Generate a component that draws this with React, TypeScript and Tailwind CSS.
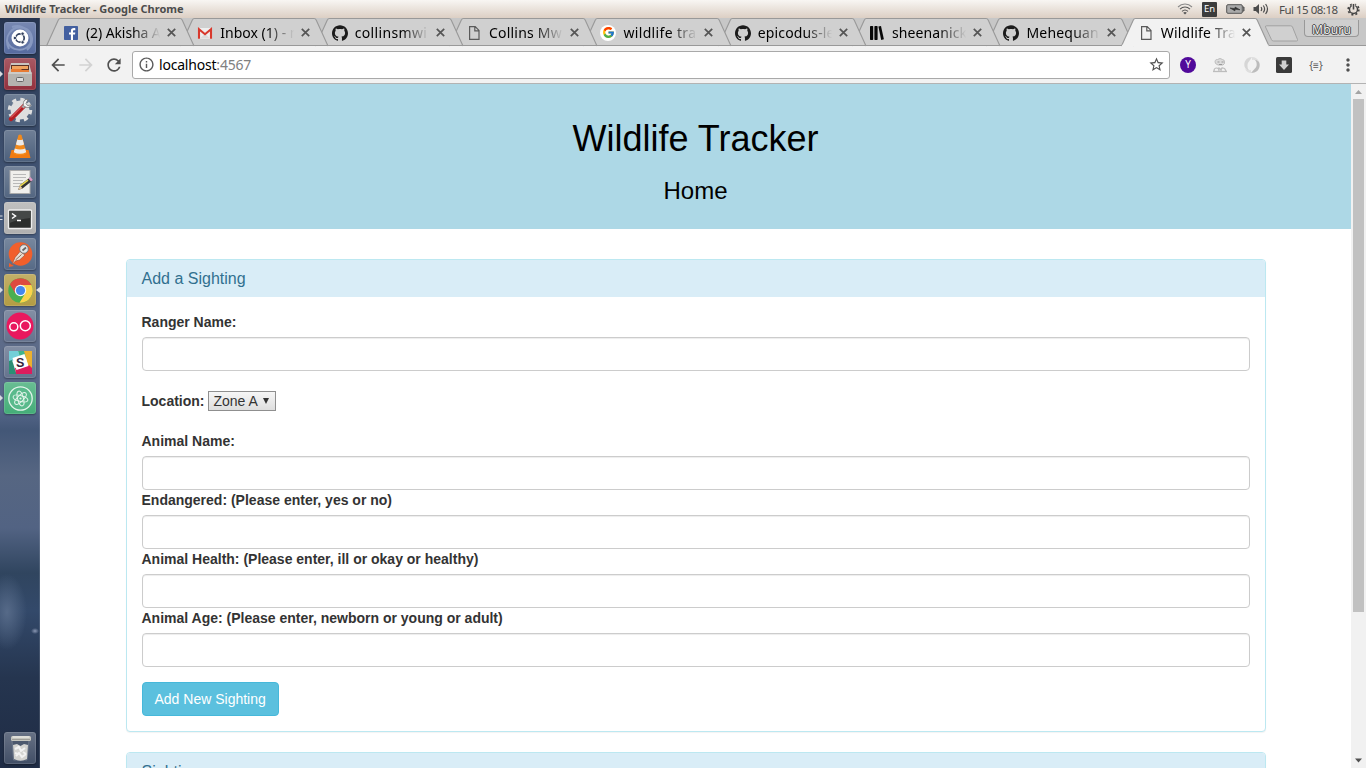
import type { ReactNode } from 'react';
import { FcGoogle } from 'react-icons/fc';
import { SiGithub } from 'react-icons/si';
import { MdArrowBack, MdArrowForward, MdRefresh, MdInfoOutline, MdStarBorder, MdMoreVert } from 'react-icons/md';

const PageIcon = () => (
  <svg width="16" height="16" viewBox="0 0 16 16" fill="none" stroke="#5a5a5a" strokeWidth="1.2">
    <path d="M3.6 1.6h5.6l3.8 3.8v9H3.6z M8.8 1.6v4.2h4.2" />
  </svg>
);

const FacebookIcon = () => (
  <svg width="16" height="16" viewBox="0 0 16 16">
    <rect x="1" y="1" width="14" height="14" rx="0.8" fill="#4360a0" />
    <path d="M10 15V9.6h2l.3-2.1H10V6.2c0-.7.3-1 1-1h1.3V3.2c-3-.4-4.4.6-4.4 2.7v1.6H6v2.1h1.9V15z" fill="#fff" />
  </svg>
);

const GmailIcon = () => (
  <svg width="16" height="16" viewBox="0 0 16 16">
    <rect x="1" y="3" width="14" height="11" rx="1" fill="#efefef" />
    <path d="M3 13.5 8 8.5l5 5z" fill="#dcdcdc" />
    <path d="M2 13.7V4.2l6 5 6-5v9.5" fill="none" stroke="#d8392d" strokeWidth="2.1" />
  </svg>
);

const BooksIcon = () => (
  <svg width="16" height="16" viewBox="0 0 16 16" fill="#080808">
    <rect x="1" y="1" width="3.2" height="14" rx=".7" />
    <rect x="5.4" y="1" width="3.2" height="14" rx=".7" />
    <path d="M9.4 1.5 12 1l2.9 13.3-2.7.7z" />
  </svg>
);

const GoogleIcon = () => (
  <span className="flex size-4 items-center justify-center rounded-full bg-white">
    <FcGoogle size={13} />
  </span>
);

type TabData = { title: string; icon: ReactNode; track: string };

const tabs: TabData[] = [
  { title: '(2) Akisha A', icon: <FacebookIcon />, track: 'tracking-[-0.1px]' },
  { title: 'Inbox (1) - m', icon: <GmailIcon />, track: 'tracking-[0px]' },
  { title: 'collinsmwi', icon: <SiGithub size={16} color="#1b1b1b" />, track: 'tracking-[0.35px]' },
  { title: 'Collins Mw', icon: <PageIcon />, track: 'tracking-[0.2px]' },
  { title: 'wildlife tra', icon: <GoogleIcon />, track: 'tracking-[0.35px]' },
  { title: 'epicodus-le', icon: <SiGithub size={16} color="#1b1b1b" />, track: 'tracking-[0.15px]' },
  { title: 'sheenanick', icon: <BooksIcon />, track: 'tracking-[0.1px]' },
  { title: 'Mehequan', icon: <SiGithub size={16} color="#1b1b1b" />, track: 'tracking-[0.2px]' },
  { title: 'Wildlife Tra', icon: <PageIcon />, track: 'tracking-[0.2px]' },
];

function Tab({ tab, index }: { tab: TabData; index: number }) {
  const active = index === 8;
  return (
    <div className="relative h-7 w-[134.35px] shrink-0" style={{ zIndex: active ? 20 : 10 - index }}>
      <svg className="absolute top-0 left-0 overflow-visible" width="149" height="28" viewBox="0 0 149 28">
        <path
          d="M.5 28 12.200 2.200Q13 .5 14.500.5H134Q135.500.5 136.300 2.200L148 28"
          fill={active ? '#f2f2f2' : '#d0d0d0'}
          stroke="#999"
          strokeWidth="1.1"
        />
        {!active && <path d="M0 27.500H149" stroke="#999" />}
        {active && <path d="M1 27.500H147.500" stroke="#f2f2f2" strokeWidth="1.500" />}
      </svg>
      <div className="relative flex h-7 items-center pt-px pl-[17px]">
        <span className="flex size-4 shrink-0 items-center justify-center">{tab.icon}</span>
        <span
          className={`ml-[7px] w-[75px] overflow-hidden font-['Noto_Sans',sans-serif] text-[14px] leading-5 whitespace-nowrap text-black [mask-image:linear-gradient(to_right,black_62%,transparent_99%)] ${tab.track}`}
        >
          {tab.title}
        </span>
        <svg className="ml-[6px] shrink-0" width="9" height="9" viewBox="0 0 9 9" stroke="#555" strokeWidth="1.7">
          <path d="M.8.8 8.200 8.200M8.200.8.8 8.200" />
        </svg>
      </div>
    </div>
  );
}

function TitleBar() {
  return (
    <div className="flex h-[18px] shrink-0 items-center justify-between bg-linear-to-b from-[#f8f6f3] to-[#dccfc4] pl-[5px] font-['Noto_Sans',sans-serif] text-[#4c4c4c]">
      <span className="text-[11px] leading-[17px] font-bold tracking-[-0.02px] relative -top-px">Wildlife Tracker - Google Chrome</span>
      <div className="flex h-[18px] items-center pr-[6px]">
        <svg width="16" height="14" viewBox="0 0 16 14" fill="none" stroke="#555" strokeWidth="1.100">
          <path d="M1 5C5 1 11 1 15 5" stroke="#8a8a8a" />
          <path d="M3 7.200C6 4.200 10 4.200 13 7.200M5 9.300C7 7.500 9 7.500 11 9.300" />
          <path d="M8 12.500 6.200 10.700Q8 9.500 9.800 10.700z" fill="#555" stroke="none" />
        </svg>
        <span className="ml-[9px] flex h-[15px] w-[15px] items-center justify-center rounded-[1px] bg-[#3c3c3c] text-[9.500px] text-white">En</span>
        <svg className="ml-[9px]" width="19" height="12" viewBox="0 0 19 12">
          <rect x=".7" y="1.700" width="15.600" height="8.600" rx="1.200" fill="#aaa" stroke="#555" />
          <path d="M16.500 4h1.500v4h-1.500" fill="#777" stroke="#555" />
          <path d="m4 5 5 .6 0-1.600 5 2.800-5-.5v1.600z" fill="#333" stroke="#333" strokeWidth=".6" />
        </svg>
        <svg className="ml-[8px]" width="16" height="14" viewBox="0 0 16 14" fill="none" stroke="#4c4c4c" strokeWidth="1.200">
          <path d="M.5 5h2.300L6 2v10L2.800 9H.5z" fill="#4c4c4c" stroke="none" />
          <path d="M8 5q1.500 2 0 4M10.300 3.500q2.600 3.500 0 7M12.600 2q3.800 5 0 10" />
        </svg>
        <span className="ml-[10px] w-[60px] text-[11.500px] leading-[17px] tracking-[-0.5px] whitespace-nowrap">Ful 15 08:18</span>
        <svg className="ml-[8px]" width="13" height="13" viewBox="0 0 13 13" fill="none" stroke="#444">
          <circle cx="6.500" cy="6.500" r="4" strokeWidth="1.400" />
          <circle cx="6.500" cy="6.500" r="5.300" strokeWidth="1.700" strokeDasharray="2 2.160" />
          <path d="M6.500 0v6.500" stroke="#ebe4de" strokeWidth="3.500" />
          <path d="M6.500 1v5.500" strokeWidth="1.600" />
        </svg>
      </div>
    </div>
  );
}

type AppTile = { name: string; bg: string; mark: string; art: ReactNode };

const apps: AppTile[] = [
  {
    name: 'dash', bg: 'bg-[#566b9f]', mark: '',
    art: (
      <>
        <path d="M5 27C-1 14 8 3 20 6c9 3 11 15 3 22M8 5c12-4 22 8 18 18M3 19c4 11 18 11 23 3" fill="none" stroke="#8798c0" strokeWidth="2" />
        <circle cx="16" cy="16" r="8.500" fill="#fff" />
        <circle cx="16" cy="16" r="4.200" fill="none" stroke="#33415f" strokeWidth="1.700" />
        <g fill="#33415f" stroke="#fff" strokeWidth=".8">
          <circle cx="10.900" cy="16" r="1.700" /><circle cx="18.600" cy="11.700" r="1.700" /><circle cx="18.600" cy="20.300" r="1.700" />
        </g>
      </>
    ),
  },
  {
    name: 'files', bg: 'bg-[#93303d]', mark: '◂r',
    art: (
      <>
        <path d="M7 5h18l3 12H4z" fill="#c9c5c0" />
        <path d="M7 7h18v9H7z" fill="#5b3224" />
        <path d="M8 8h16v3H8z" fill="#f0a45f" /><path d="M7 11h10l1 1h7v3H7z" fill="#e77c35" />
        <rect x="4" y="14" width="24" height="14" rx="1.500" fill="#b5b3af" />
        <path d="M4.500 15h23" stroke="#e5e3df" />
        <rect x="12.500" y="19.500" width="7" height="4" rx="1" fill="#ddd" stroke="#666" />
      </>
    ),
  },
  {
    name: 'settings', bg: 'bg-[#4c607c]', mark: '',
    art: (
      <>
        <circle cx="16" cy="16" r="9.500" fill="#dedede" />
        <circle cx="16" cy="16" r="10.500" fill="none" stroke="#dedede" strokeWidth="3.500" strokeDasharray="4.200 4.050" />
        <path d="m7 25 13-13" stroke="#b51f24" strokeWidth="4.500" strokeLinecap="round" />
        <path d="m7 23.500 11-11" stroke="#e77375" />
        <path d="m18.500 13.500 3-3" stroke="#aaa" strokeWidth="3" />
        <path d="M24 5.500a4 4 0 1 0 3 5.500l-3.500.5-1.500-2z" fill="#f2f2f2" stroke="#777" strokeWidth=".8" />
      </>
    ),
  },
  {
    name: 'vlc', bg: 'bg-[#4c607c]', mark: '',
    art: (
      <>
        <path d="m7.500 20-2 8h21l-2-8z" fill="#ef7b12" />
        <path d="m14.500 5-5 18c1 3 12 3 13 0L17.500 5q-1.500-1.200-3 0z" fill="#f28a1c" />
        <path d="m13.300 9.500-1.400 5q4 1.800 8.200 0l-1.400-5q-2.700 1-5.400 0z" fill="#ecebea" />
        <path d="m10.800 18.500-1 3.700q6 3 12.400 0l-1-3.700q-5 2-10.400 0z" fill="#ecebea" />
      </>
    ),
  },
  {
    name: 'editor', bg: 'bg-[#536681]', mark: '',
    art: (
      <>
        <rect x="6" y="4.500" width="20" height="23" fill="#f0efec" stroke="#aaa" />
        <path d="M9 8.500h13M9 11.500h13M9 14.500h10M9 17.500h9M9 20.500h6" stroke="#b9b9b9" />
        <path d="m14 24 2-5 10-7.500 2.500 3-10 8z" fill="#333" />
        <path d="m15.500 19.500 8-6 1 1.300-8 6z" fill="#e9d74e" />
        <path d="m14 24 2-4.500 2.500 2.800z" fill="#e7c99c" />
        <path d="m24.500 12.500 2-1.500 2.400 3-2 1.500z" fill="#df9bc5" />
      </>
    ),
  },
  {
    name: 'terminal', bg: 'bg-[#b0b0b0]', mark: '=r',
    art: (
      <>
        <rect x="4.500" y="8" width="23" height="18.500" rx="1" fill="#2b2d2c" stroke="#eee" strokeWidth="1.400" />
        <path d="M5.500 9h21v7q-12 1-21 5z" fill="#454847" />
        <path d="m8 11.500 3.500 2.500L8 16.500M13 18.500h4" fill="none" stroke="#fff" strokeWidth="1.500" />
      </>
    ),
  },
  {
    name: 'postman', bg: 'bg-[#566a86]', mark: '',
    art: (
      <>
        <circle cx="16.500" cy="16" r="11.800" fill="#f15f2b" />
        <path d="m5 25 5 3-5 1z" fill="#f15f2b" />
        <path d="M8 26.500 11 19.500l5-6 5 3.500-5.500 5-4 1z" fill="#e8dfd3" stroke="#a75236" strokeWidth=".7" />
        <path d="m11.500 22 6-5.500" stroke="#8b6a5a" />
        <circle cx="20" cy="11" r="4.300" fill="#e5e5e5" stroke="#777" />
        <path d="m18.500 12.500 3.500-3" stroke="#666" strokeWidth="1.800" />
      </>
    ),
  },
  {
    name: 'chrome', bg: 'bg-[#b39c43]', mark: '◂rl',
    art: (
      <>
        <circle cx="16.500" cy="16.500" r="12.200" fill="#4aaf50" />
        <path d="M5.900 10.400a12.200 12.200 0 0 1 21.200 0l.3.700H16.500l-5.300 8.200z" fill="#de4b40" />
        <path d="M27.400 11.100A12.200 12.200 0 0 1 15.500 28.700l6-9.700-5-7.900z" fill="#fbd34a" />
        <circle cx="16.500" cy="16.500" r="5.700" fill="#f6f6f6" />
        <circle cx="16.500" cy="16.500" r="4.600" fill="#4587ee" />
      </>
    ),
  },
  {
    name: 'recorder', bg: 'bg-[#65738e]', mark: '',
    art: (
      <>
        <circle cx="16" cy="16" r="13.500" fill="#e9185e" />
        <g fill="none" stroke="#fff" strokeWidth="1.500"><circle cx="9.800" cy="16.800" r="4" /><circle cx="21.300" cy="15.800" r="5" /></g>
      </>
    ),
  },
  {
    name: 'slack', bg: 'bg-[#65738e]', mark: '',
    art: (
      <>
        <rect x="5" y="5" width="23" height="23" fill="#fff" />
        <path d="M5 5h9l2.500 7L5 16z" fill="#73cfd8" />
        <path d="M14 5h14v5l-11.500 3z" fill="#3fb38d" />
        <path d="m20 5 8 0v17l-3 1z" fill="#ecb02f" />
        <path d="m5 15 3-1 4.500 14H5z" fill="#2c8f75" />
        <path d="m11 22 14-3 3 3v6H12z" fill="#dd1c5d" />
        <path d="m8.500 12 12-4 4 12-12 4z" fill="#fff" />
        <text x="12" y="20.500" fontFamily="Liberation Sans, sans-serif" fontWeight="bold" fontSize="12.500" fill="#35233c">S</text>
      </>
    ),
  },
  {
    name: 'atom', bg: 'bg-[#44ad78]', mark: '◂r',
    art: (
      <g fill="none" stroke="#e3f4eb">
        <circle cx="16.500" cy="16.500" r="11.700" fill="#59ba8c" strokeWidth="1.300" />
        <ellipse cx="16.500" cy="16.500" rx="7.600" ry="2.900" transform="rotate(15 16.500 16.500)" />
        <ellipse cx="16.500" cy="16.500" rx="7.600" ry="2.900" transform="rotate(75 16.500 16.500)" />
        <ellipse cx="16.500" cy="16.500" rx="7.600" ry="2.900" transform="rotate(135 16.500 16.500)" />
        <circle cx="16.500" cy="16.500" r="1.100" fill="#e3f4eb" stroke="none" />
      </g>
    ),
  },
];

function Tile({ app }: { app: AppTile }) {
  return (
    <div className="relative h-8 w-10 shrink-0 px-1">
      {app.mark.includes('◂r') && <svg className="absolute top-[13px] left-0" width="3" height="6"><path d="M0 0 3 3 0 6z" fill="#d8dbe0" /></svg>}
      {app.mark.includes('=r') && <svg className="absolute top-[13px] left-0" width="3" height="6"><path d="M0 1h2.500M0 4.500h2.500" stroke="#d8dbe0" /></svg>}
      {app.mark.includes('l') && <svg className="absolute top-[13px] right-0" width="4" height="6"><path d="M4 0 0 3 4 6z" fill="#e2e4e8" /></svg>}
      <div className={`size-8 overflow-hidden rounded-[3px] bg-linear-to-b from-white/20 to-transparent shadow-[inset_0_0_0_1px_rgba(255,255,255,0.12),0_1px_2px_rgba(0,0,0,0.35)] ${app.bg}`}>
        <svg width="32" height="32" viewBox="0 0 32 32">{app.art}</svg>
      </div>
    </div>
  );
}

const trash: AppTile = {
  name: 'trash', bg: 'bg-[#414e66]', mark: '',
  art: (
    <>
      <path d="m8 8 1.500 20h13.500l2-20z" fill="#4c586d" stroke="#7f899b" strokeWidth=".6" />
      <path d="m9 13 4-1 3.500 2 3.500-2 4 1-1 14q-6.500 3.500-13 0z" fill="#d3d3d0" />
      <path d="m11 17 4-2 2 4 4-3M12 24l3-3 3 4 4-3M14 14l2 3M11 21l3 1M19 20l3 2" stroke="#f2f2f2" strokeWidth="2" fill="none" />
      <rect x="7" y="4" width="20" height="5" rx="1.500" fill="#c4c4bd" />
      <path d="M8.500 5h17" stroke="#f8f8f3" />
      <path d="M8 7.500h18" stroke="#8e8e88" strokeWidth=".7" />
    </>
  ),
};

function Launcher() {
  return (
    <div className="flex w-10 shrink-0 flex-col bg-[radial-gradient(ellipse_20px_38px_at_7px_594px,#566a88_0%,transparent_100%),radial-gradient(ellipse_4px_3px_at_35px_613px,#8a97b3_0%,transparent_100%),linear-gradient(to_bottom,#26344f_0%,#3b4d6b_16%,#4b6082_30%,#5e6c89_42%,#56678a_52%,#435777_55%,#566682_61%,#526383_68%,#30455f_74%,#33496a_79%,#25354f_88%,#1f2c45_100%)] pt-1 shadow-[inset_-1px_0_0_rgba(255,255,255,0.12)]">
      <div className="flex flex-col gap-1">
        {apps.map((a) => <Tile key={a.name} app={a} />)}
      </div>
      <div className="mt-auto pb-1"><Tile app={trash} /></div>
    </div>
  );
}

function TabStrip() {
  return (
    <div className="flex h-7 shrink-0 bg-[#c7c7c7] pl-[6px] shadow-[inset_0_-1px_0_#999]">
      {tabs.map((t, i) => <Tab key={t.title} tab={t} index={i} />)}
      <svg className="mt-[7px] ml-[9px] shrink-0" width="35" height="17" viewBox="0 0 35 17">
        <path d="M2.500.8h24q1.500 0 2 1.200l5 12.500q.5 1.500-1 1.500H9.500q-1.500 0-2-1.300L1.500 2q-.4-1.200 1-1.200z" fill="#d0d0d0" stroke="#a2a2a2" />
      </svg>
      <div className="mt-[2px] ml-[5px] flex h-[17px] w-[55px] shrink-0 items-center justify-center rounded-b-[4px] border border-t-0 border-[#999] bg-[#cfcfcf] pt-[3px] font-['Noto_Sans',sans-serif] text-[12px] tracking-[0.2px] text-[#f2f2f2] [text-shadow:0_0_1px_#222,1px_0_0_#555,-1px_0_0_#555,0_1px_0_#555,0_-1px_0_#555]">
        Mburu
      </div>
    </div>
  );
}

function Toolbar() {
  return (
    <div className="flex h-[38px] shrink-0 items-center border-b border-[#b3b3b3] bg-[#f2f2f2] pl-[8px]">
      <MdArrowBack size={20} color="#505050" />
      <MdArrowForward className="ml-[8px]" size={20} color="#d2d2d2" />
      <MdRefresh className="ml-[8px]" size={20} color="#505050" />
      <div className="ml-[8px] flex h-[28px] w-[1038px] items-center rounded-[3px] border border-[#a9a9a9] bg-white pr-[4px] pl-[5px]">
        <MdInfoOutline size={17} color="#5a5a5a" />
        <span className="ml-[4px] font-['Noto_Sans',sans-serif] text-[14px] leading-5 tracking-[-0.2px] text-black">
          localhost<span className="text-[#808080]">:4567</span>
        </span>
        <MdStarBorder className="ml-auto" size={17} color="#505050" />
      </div>
      <span className="ml-[10px] flex size-4 items-center justify-center rounded-full bg-[#510a9a] font-['Noto_Sans',sans-serif] text-[10px] text-white">Y</span>
      <svg className="ml-[16px]" width="16" height="16" viewBox="0 0 16 16" fill="none" stroke="#bdbdbd">
        <path d="M3.500 6.500Q2 2.500 5.500 2.500 8 .5 10.500 2.500 13 2.500 12.500 6.500L11 8H6z" fill="#dcdcdc" />
        <path d="M5.500 5h2M9.500 5h2M7 7.500h3" stroke="#999" />
        <path d="M2 14q0-3 2.500-3T7 14M9 14q0-3 2-3t3 3M6.500 10.500l2 2 2-2" strokeWidth="1.200" />
        <path d="M1 14.500h14" strokeWidth="1.300" />
      </svg>
      <svg className="ml-[16px]" width="16" height="16" viewBox="0 0 16 16">
        <path d="M8 0C4 0 .3 3 .3 7.500c0 4 3 6.500 5.700 6.500-2-1.500-2.500-3-2.500-5.500C3.500 5 6 4 8 0z" fill="#d6d6d6" />
        <path d="M7 16c5 0 8.700-3 8.700-8C15.700 4 12.500 1.500 10 2c2 1.500 2.700 3 2.700 5.500C12.700 11 10 12 7 16z" fill="#bcbcbc" />
        <path d="M8 0q5 0 7 5-3-3-7-2zM7 16q-4 0-6-4 3 2 6 1z" fill="#dedede" />
      </svg>
      <svg className="ml-[16px]" width="16" height="16" viewBox="0 0 16 16">
        <rect width="16" height="16" rx="1.500" fill="#3a3a3a" />
        <path d="M5.700 3.500h4.600v4H13L8 13 3 7.500h2.700z" fill="#d0d0d0" />
      </svg>
      <span className="ml-[16px] w-4 text-center font-['Noto_Sans',sans-serif] text-[10px] leading-4 whitespace-nowrap text-[#555]">{'{≡}'}</span>
      <MdMoreVert className="ml-[14px]" size={20} color="#505050" />
    </div>
  );
}

const inputClass =
  'block h-[34px] w-full rounded-[4px] border border-[#ccc] bg-white px-3 shadow-[inset_0_1px_1px_rgba(0,0,0,0.075)] outline-none';

function Field({ label }: { label: string }) {
  return (
    <label className="block">
      <span className="mb-[5px] block leading-5 font-bold">{label}</span>
      <input type="text" className={inputClass} />
    </label>
  );
}

function Panel({ title, children }: { title: string; children?: ReactNode }) {
  return (
    <section className="mb-5 rounded-[4px] border border-[#bce8f1] bg-white shadow-[0_1px_1px_rgba(0,0,0,0.05)]">
      <h3 className="h-[37px] rounded-t-[3px] bg-[#d9edf7] px-[15px] pt-[10px] text-[16px] leading-[17.6px] text-[#31708f]">{title}</h3>
      <div className="p-[15px]">{children}</div>
    </section>
  );
}

function Page() {
  return (
    <main className="min-w-0 flex-1 overflow-hidden bg-white font-['Liberation_Sans',Arial,sans-serif] text-[14px] leading-5 text-[#333]">
      <header className="h-[145px] bg-[#add8e6] pt-[35px] text-center text-black">
        <h1 className="text-[36px] leading-[39.6px]">Wildlife Tracker</h1>
        <h2 className="mt-[19px] text-[24px] leading-[26.4px]">Home</h2>
      </header>
      <div className="mx-auto mt-[30px] w-[1140px]">
        <Panel title="Add a Sighting">
          <Field label="Ranger Name:" />
          <div className="my-5 flex h-5 items-center">
            <span className="font-bold">Location:</span>
            <button className="ml-[3px] flex h-5 w-[68px] items-center border border-[#8f8f8f] bg-linear-to-b from-[#f6f6f6] to-[#dedede] pl-[5px] text-[14px] leading-[18px]">
              Zone A
              <svg className="ml-[5px]" width="6" height="6" viewBox="0 0 6 6"><path d="M0 0h6L3 6z" fill="#333" /></svg>
            </button>
          </div>
          <Field label="Animal Name:" />
          <Field label="Endangered: (Please enter, yes or no)" />
          <Field label="Animal Health: (Please enter, ill or okay or healthy)" />
          <Field label="Animal Age: (Please enter, newborn or young or adult)" />
          <button className="mt-[15px] block h-[34px] rounded-[4px] border border-[#46b8da] bg-[#5bc0de] px-3 text-[14px] leading-5 text-white">
            Add New Sighting
          </button>
        </Panel>
        <Panel title="Sightings" />
      </div>
    </main>
  );
}

function Scrollbar() {
  return (
    <div className="flex w-[15px] shrink-0 flex-col items-center bg-[#f1f1f1]">
      <svg className="shrink-0" width="15" height="15"><path d="M4 10 7.500 6 11 10z" fill="#a3a3a3" /></svg>
      <div className="h-[513px] w-[11px] shrink-0 bg-[#c1c1c1]" />
      <svg className="mt-auto shrink-0" width="15" height="15"><path d="M4 5.500 7.500 9.500 11 5.500z" fill="#505050" /></svg>
    </div>
  );
}

export default function App() {
  return (
    <div className="flex h-[768px] w-[1366px] flex-col overflow-hidden bg-white">
      <TitleBar />
      <div className="flex min-h-0 flex-1">
        <Launcher />
        <div className="flex min-w-0 flex-1 flex-col">
          <TabStrip />
          <Toolbar />
          <div className="flex min-h-0 flex-1">
            <Page />
            <Scrollbar />
          </div>
        </div>
      </div>
    </div>
  );
}
